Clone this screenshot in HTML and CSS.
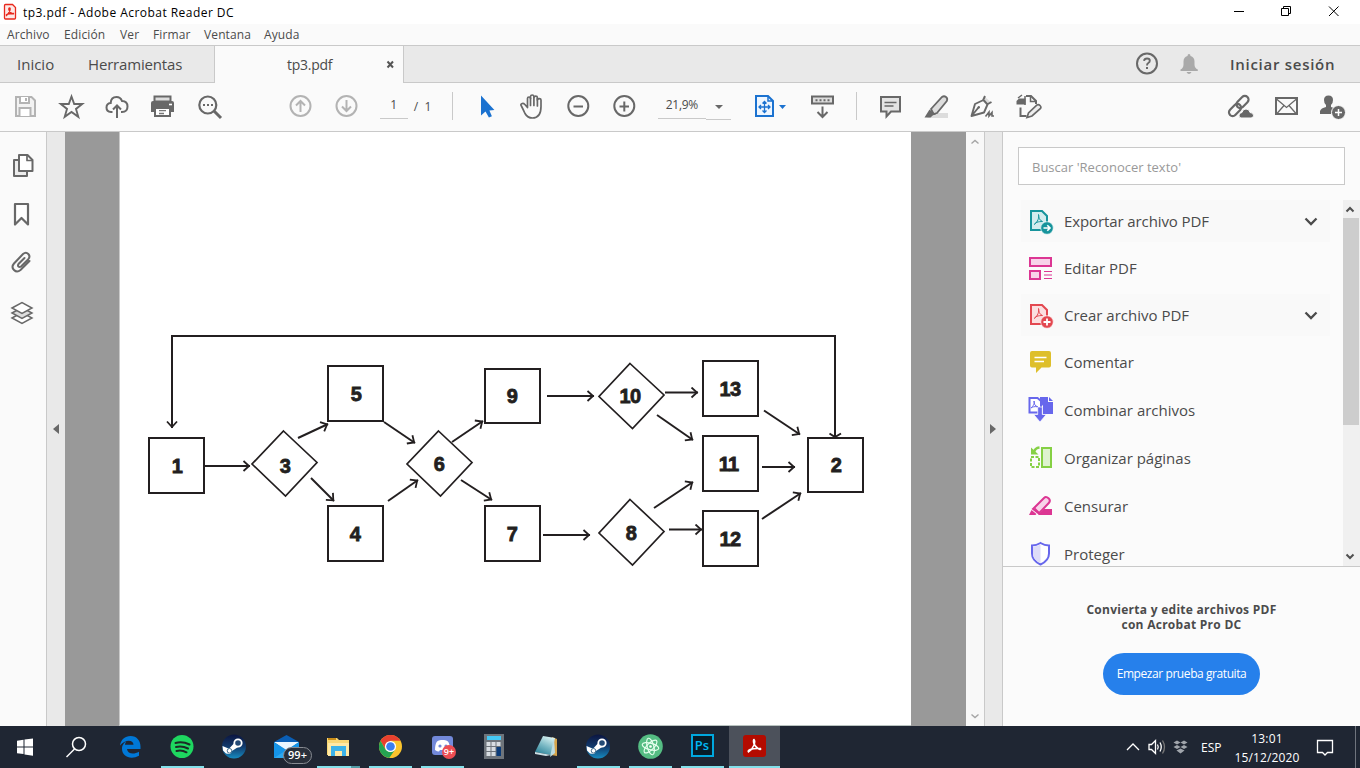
FILE: index.html
```html
<!DOCTYPE html>
<html lang="es">
<head>
<meta charset="utf-8">
<title>tp3.pdf - Adobe Acrobat Reader DC</title>
<link rel="stylesheet" href="styles.css">
</head>
<body>
<div class="screen">
  <header class="titlebar">
    <svg class="app-icon" viewBox="3 3 14 18"><path d="M5.5 4.500h7l3 3v10.500q0 1-1 1h-9q-1 0-1-1v-12.500q0-1 1-1z" fill="#fde9e7" stroke="#e8281c" stroke-width="1.300"/><path d="M9.500 8c1.500 0 .5 4-3 7.500-1-1 1.500-2 7-2 .5 1-3 .5-4.500-3.500-.5-1.200 0-2 .5-2z" fill="none" stroke="#e8281c" stroke-width="1.300"/></svg>
    <span class="title">tp3.pdf - Adobe Acrobat Reader DC</span>
    <svg class="win-controls" viewBox="1220 0 140 24" fill="none" stroke="#000"><path d="M1234 11.500h10M1281.500 8.500h7v7h-7zM1283.500 8.500v-2h7v7h-2M1329 6.500l9.500 9.500M1338.500 6.500l-9.500 9.500"/></svg>
  </header>
  <nav class="menubar"><span class="m1">Archivo</span><span class="m2">Edición</span><span class="m3">Ver</span><span class="m4">Firmar</span><span class="m5">Ventana</span><span class="m6">Ayuda</span></nav>
  <div class="tabs">
    <div class="tabs-left"><span class="t1">Inicio</span><span class="t2">Herramientas</span></div>
    <div class="tab-active"><span>tp3.pdf</span><svg class="tab-x" viewBox="386 60 9 9"><path d="M387.500 61.500l5.500 6M393 61.500l-5.500 6" stroke="#555" stroke-width="2"/></svg></div>
    <div class="tabs-right">
      <svg class="i28" viewBox="1133 50 28 28" fill="none" stroke="#686868"><circle cx="1147" cy="63.500" r="10" stroke-width="2"/><path d="M1144 60.800q.4-2.300 3-2.300 2.800 0 2.800 2.300 0 1.400-1.500 2.200-1.300.8-1.300 2.500" stroke-width="1.900"/><path d="M1147 67v2" stroke-width="2"/></svg>
      <svg class="i28 bell" viewBox="1175 50 28 28" fill="#a9a9a9"><path d="M1180.500 71v-1.500q3-1.500 3-5v-3q0-4.500 4-5.500 0-2 1.500-2t1.500 2q4 1 4 5.500v3q0 3.500 3.300 5v1.500zM1186.500 72h5q-1 2-2.500 2t-2.500-2z"/></svg>
      <b class="signin">Iniciar sesión</b>
    </div>
  </div>
  <div class="toolbar">
    <div class="group g1">
      <svg class="i28" viewBox="12 92 28 28" fill="none" stroke="#b3b3b3" stroke-width="2"><path d="M16 97h15.500l3.500 3.500v15.500h-19z" fill="#f2f2f2"/><path d="M20 97v6h9v-6M19.500 116v-8h11v8" fill="#fff"/><path d="M26 98v3"/></svg>
      <svg class="i28" viewBox="58 92 28 28" fill="none" stroke="#686868" stroke-width="1.900"><path d="M71.500 96.500l2.700 7.500h8l-6.200 4.900 2.300 7.900-6.800-4.800-6.800 4.800 2.300-7.900-6.200-4.900h8z"/></svg>
      <svg class="i28" viewBox="103.500 92 28 28" fill="none" stroke="#686868" stroke-width="2"><path d="M113 112h-1.500q-4.500-.3-4.500-4.500 0-4 4.200-4.500.3-6 5.800-6 4 0 5.500 4 5.500.2 5.500 5.500 0 5.500-5.500 5.500h-1M117.500 118v-12M113.500 109.500l4-4 4 4"/></svg>
      <svg class="i28" viewBox="149 92 28 28"><path d="M154.500 96.500h16v5h-16z" fill="#ddd" stroke="#686868" stroke-width="2"/><path d="M153 101h19q2 0 2 2v9h-23v-9q0-2 2-2z" fill="#686868"/><path d="M155 108h15v8h-15z" fill="#fff" stroke="#686868" stroke-width="2"/><path d="M159 110.700h7M159 113.500h5" stroke="#777" stroke-width="1.300"/><path d="M169 104.500h3" stroke="#fff" stroke-width="1.600"/></svg>
      <svg class="i28" viewBox="195 92 28 28" fill="none" stroke="#686868"><circle cx="207.800" cy="105" r="8.500" stroke-width="2.200"/><path d="M214 111l7 7" stroke-width="3"/><path d="M203 105h10" stroke-width="2" stroke-dasharray="2 2"/></svg>
    </div>
    <div class="group g2">
      <svg class="i28" viewBox="286 92 28 28" fill="none" stroke="#b3b3b3" stroke-width="2"><circle cx="300.500" cy="106" r="10"/><path d="M300.500 112v-11M296 105.500l4.500-4.500 4.500 4.500"/></svg>
      <svg class="i28" viewBox="332 92 28 28" fill="none" stroke="#b3b3b3" stroke-width="2"><circle cx="346.500" cy="106" r="10"/><path d="M346.500 100v11M342 106.500l4.500 4.500 4.500-4.500"/></svg>
    </div>
    <div class="page-box">1</div><div class="page-total">/&nbsp; 1</div>
    <div class="sep s1"></div>
    <div class="group g3">
      <svg class="i28" viewBox="473 92 28 28"><path d="M481 95.500v20l4.500-4 3.400 6 3-1.300-2.500-5.700 5-.5z" fill="#1b72d0"/></svg>
      <svg class="i28" viewBox="519 92 28 28" fill="none" stroke="#686868" stroke-width="1.700" stroke-linecap="round" stroke-linejoin="round"><path d="M528.500 106.500v-8q0-1.500 1.500-1.500t1.500 1.500v-2q.2-1.500 1.700-1.500t1.700 1.500v1q.2-1.400 1.800-1.400t1.700 1.400v2.500q.2-1.400 1.900-1.400t1.700 1.400v6.500c0 7-2.500 11.500-8.500 11.500q-5 0-7.500-4.500-1.800-4-3.600-7.500-1.200-1.500.3-2.300 1.700-.7 3.200.8l2.600 3z"/><path d="M531.500 98v7.500M534.900 97v8.500M538.400 98.500v7.500"/></svg>
      <svg class="i28" viewBox="564 92 28 28" fill="none" stroke="#686868" stroke-width="2"><circle cx="578.300" cy="106" r="10"/><path d="M573.500 106.500h9.500"/></svg>
      <svg class="i28" viewBox="610 92 28 28" fill="none" stroke="#686868" stroke-width="2"><circle cx="624.300" cy="106" r="10"/><path d="M619.500 106.500h9.500M624.300 101.500v10"/></svg>
    </div>
    <div class="zoom-box">21,9%</div><div class="zoom-drop"><i class="caret"></i></div>
    <div class="group g4">
      <svg class="fit" viewBox="752 92 38 28" fill="none" stroke="#1b72d0"><path d="M756 96h12l5 5v15h-17z" fill="#eef6ff" stroke-width="2"/><path d="M768 96v5h5" stroke-width="1.500"/><path d="M764.500 101.500v11M759 107h11M762.500 103.500l2-2 2 2M762.500 110.500l2 2 2-2M761 105l-2 2 2 2M768 105l2 2-2 2" stroke-width="1.300"/><path d="M779 105h7l-3.500 4z" fill="#1b72d0" stroke="none"/></svg>
      <svg class="i28 kb" viewBox="808 92 28 28" fill="none" stroke="#686868" stroke-width="2"><path d="M812 96.500h21v7h-21z" fill="#ddd"/><path d="M815.500 100.200h14" stroke-dasharray="2 2"/><path d="M822.500 106.500v10M817.500 112l5 5 5-5"/></svg>
    </div>
    <div class="sep s2"></div>
    <div class="group g5">
      <svg class="i28" viewBox="876 92 28 28" fill="#e4e4e4" stroke="#686868" stroke-width="2"><path d="M881 97h19v14.500h-9l-4.500 5v-5h-5.500z"/><path d="M884.500 102.500h12M884.500 106h9" stroke-width="1.300"/></svg>
      <svg class="i28" viewBox="922 92 28 28"><path d="M931 113h17v5h-21z" fill="#dcdcdc"/><path d="M931 109l11-12q2-1.500 4 0t.8 4l-9.800 12-3.500 1z" fill="#ddd" stroke="#686868" stroke-width="1.800"/><path d="M929.500 109.500l6.500 5-3 .8-2.500 2.200h-6z" fill="#686868"/></svg>
      <svg class="i28" viewBox="968 92 28 28" fill="none" stroke="#686868" stroke-width="1.900"><path d="M984.500 96.500l6 5.500-3 3-6-5z" fill="#ddd" stroke="none"/><path d="M971.500 116l3.500-12 8.500-4 4 4.500-3.500 8zM971.500 116l7-8.500M983 100.500l2-4.500M987 104.500l4.500-2.500" stroke-linejoin="round"/><circle cx="978.800" cy="107.200" r="1.200" fill="#686868" stroke="none"/><path d="M985.500 116.500l3.500-4.500v4l3-3.500v3.500h2" stroke-width="1.600"/></svg>
      <svg class="i28" viewBox="1014 92 28 28" fill="none" stroke="#686868" stroke-width="2"><path d="M1026 96h5l5 5v3M1020.500 107.500v8.500h6"/><path d="M1030.500 96v5.500h5.500" stroke-width="1.500"/><path d="M1019 98.500h6.500v6h-9v-3.500z" fill="#686868" stroke="none"/><path d="M1018 98l4-3M1025 96v9" stroke="#686868" stroke-width="1.500"/><path d="M1027 117.500l1.500-4.500 8.500-8q1.500-1 3 .5t.5 3l-8.500 7.500z" fill="#eee" stroke-width="1.700"/></svg>
    </div>
    <div class="group g6">
      <svg class="i28" viewBox="1226 92 28 28"><g fill="none" stroke="#686868" stroke-width="2.200"><rect x="-7" y="-3.700" width="14" height="7.400" rx="3.700" transform="translate(1235 110) rotate(-45)"/><rect x="-7" y="-3.700" width="14" height="7.400" rx="3.700" transform="translate(1242.500 102) rotate(-45)"/></g><path d="M1241 118q-2.500-.5-2-3t3-2.500q.5-3.500 4-3.500t4 3.500q3.500 0 3.500 3 0 2.500-2.500 2.500z" fill="#686868" stroke="#fafafa" stroke-width="1"/></svg>
      <svg class="i28" viewBox="1272 92 28 28" fill="none" stroke="#686868"><path d="M1276 98h21v16h-21z" stroke-width="2"/><path d="M1276.500 99l10 8.500 10-8.500M1277 113.500l7-8M1296 113.500l-7-8" stroke-width="1.300"/></svg>
      <svg class="i28" viewBox="1318 92 28 28" fill="#686868"><path d="M1320 114v-3q1-3 6-4v-2q-2-1.500-2-5 0-4.500 4.500-4.500t4.500 4.500q0 3.500-2 5v2l4 1.500-4 5.500z"/><circle cx="1338.500" cy="112.500" r="7" stroke="#fafafa"/><path d="M1338.500 109v7M1335 112.500h7" stroke="#fff" stroke-width="1.500"/></svg>
    </div>
  </div>
  <main class="work">
    <aside class="rail">
      <svg class="r1" viewBox="9 151 28 28" fill="#ececec" stroke="#686868" stroke-width="2" stroke-linejoin="round"><path d="M18 160h-4v16h13v-5" /><path d="M19 155h8.500l5 5v11h-13.500z" fill="#fff"/><path d="M27 155v5.500h5.500" fill="none" stroke-width="1.700"/></svg>
      <svg class="r2" viewBox="9 200 28 28" fill="#fff" stroke="#686868" stroke-width="2.200" stroke-linejoin="round"><path d="M15 204h13v20.500l-6.500-6.500-6.500 6.500z"/></svg>
      <svg class="r3" viewBox="9 248 28 28" fill="none" stroke="#686868" stroke-width="2" stroke-linecap="round"><path d="M29.500 261l-9 9q-3.500 3-6.500 0t0-6.500l9-9.500q3-2.500 5.300 0t0 5.200l-7.300 7.300q-1.500 1-2.500 0t0-2.500l6-6"/></svg>
      <svg class="r4" viewBox="9 299 28 28" fill="#ddd" stroke="#686868" stroke-width="1.500"><path d="M12 318l10-5.500 10 5.500-10 5.500z" fill="#fff"/><path d="M12 313l10-5.500 10 5.500-10 5.500z"/><path d="M12 308l10-5.500 10 5.500-10 5.500z" fill="#fff"/></svg>
    </aside>
    <div class="gutter"><i class="tri-left"></i></div>
    <section class="viewer">
      <div class="page">
        <svg class="diagram" viewBox="120 132 791 593">
          <defs><marker id="head" viewBox="-7 -6 9 12" markerWidth="9" markerHeight="12" markerUnits="userSpaceOnUse" orient="auto" refX="1" refY="0"><path d="M-5.500-5L0 0l-5.500 5" fill="none" stroke="#231f20" stroke-width="1.800"/></marker></defs>
          <g fill="none" stroke="#231f20" stroke-width="2">
            <rect x="149" y="438" width="55" height="55"/><rect x="328" y="366" width="55" height="55"/><rect x="328" y="506" width="55" height="55"/><rect x="485" y="369" width="55" height="54"/><rect x="485" y="506" width="55" height="55"/><rect x="703" y="361" width="55" height="55"/><rect x="703" y="436" width="55" height="55"/><rect x="703" y="511" width="55" height="55"/><rect x="808" y="438" width="55" height="54"/>
            <path stroke-width="1.700" d="M283.500 431l33.500 31.500-31.500 33.500-33.500-32zM438.500 431l33.500 31.500-31.500 33.500-33.500-32zM630 363.500l34 31.500-31.500 33.500-33.500-32zM630 499.500l34 32-31.500 33.500-33.500-32z"/>
            <path d="M835 437v-101h-663v92" marker-end="url(#head)"/><path d="M829.500 433.500l5.500 3.500 6-3.500"/>
            <path d="M205 466h45" marker-end="url(#head)"/><path d="M298 438l30-14" marker-end="url(#head)"/><path d="M311 478l23 23" marker-end="url(#head)"/><path d="M384 422l31 21" marker-end="url(#head)"/><path d="M388 501l30-21" marker-end="url(#head)"/><path d="M452 442l31-21" marker-end="url(#head)"/><path d="M461 480l31 20" marker-end="url(#head)"/><path d="M547 396h47" marker-end="url(#head)"/><path d="M543 535h47" marker-end="url(#head)"/><path d="M665 392.500h33" marker-end="url(#head)"/><path d="M657 415l36 25" marker-end="url(#head)"/><path d="M654 508l39-26" marker-end="url(#head)"/><path d="M669 529.500h33" marker-end="url(#head)"/><path d="M764 410.500l36 24" marker-end="url(#head)"/><path d="M762 467h33" marker-end="url(#head)"/><path d="M762 519l39-26" marker-end="url(#head)"/>
          </g>
          <g class="num"><text x="177" y="472.500">1</text><text x="285" y="472.500">3</text><text x="356" y="401">5</text><text x="355" y="541">4</text><text x="439" y="471">6</text><text x="512" y="402.500">9</text><text x="512" y="541">7</text><text x="630" y="402.500">10</text><text x="631" y="540">8</text><text x="730" y="395.500">13</text><text x="728.500" y="471">11</text><text x="730" y="546">12</text><text x="836" y="472">2</text></g>
        </svg>
      </div>
    </section>
    <div class="vscroll"><svg viewBox="0 0 10 7"><path d="M1.500 5.500l3.500-3 3.500 3"/></svg><svg viewBox="0 0 10 7"><path d="M1.500 1.500l3.500 3 3.500-3"/></svg></div>
    <div class="splitter"><i class="tri-right"></i></div>
    <aside class="panel">
      <div class="search">Buscar 'Reconocer texto'</div>
      <div class="tools">
        <div class="tool-list">
          <div class="tool shaded"><svg viewBox="1028 206 28 28"><path d="M1031 210h11l5 5v14h-16z" fill="#d3ecee" stroke="#17949c" stroke-width="2"/><path d="M1038.500 213.500c1 3-1 7.500-4 10 0-2 4-3 8-3-3-1-4-4-4-7z" fill="none" stroke="#17949c"/><circle cx="1047" cy="227" r="6.300" fill="#17949c" stroke="#fff" stroke-width=".7"/><path d="M1043.500 227h6M1047.300 224.300l2.700 2.700-2.700 2.700" stroke="#fff" stroke-width="1.600" fill="none"/></svg><span class="tight">Exportar archivo PDF</span><svg class="chev" viewBox="0 0 14 9"><path d="M1.500 1.500l5.500 5.500 5.500-5.500"/></svg></div>
          <div class="tool"><svg viewBox="1028 253 28 28" fill="#f8d3e9" stroke="#dc3693" stroke-width="2"><path d="M1030 257h21v8h-21zM1030 270h10v8h-10z"/><path d="M1044 270.500h8M1044 274h8M1044 277.500h8" stroke-width="1.200"/></svg><span>Editar PDF</span></div>
          <div class="tool shaded"><svg viewBox="1028 300 28 28"><path d="M1031 304h11l5 5v14h-16z" fill="#fbdfe0" stroke="#e34850" stroke-width="2"/><path d="M1038.500 307.500c1 3-1 7.500-4 10 0-2 4-3 8-3-3-1-4-4-4-7z" fill="none" stroke="#e34850"/><circle cx="1047" cy="321" r="6.300" fill="#e34850" stroke="#fff" stroke-width=".7"/><path d="M1043.500 321h7M1047 317.500v7" stroke="#fff" stroke-width="1.800"/></svg><span>Crear archivo PDF</span><svg class="chev" viewBox="0 0 14 9"><path d="M1.500 1.500l5.500 5.500 5.500-5.500"/></svg></div>
          <div class="tool"><svg viewBox="1028 348 28 28"><path d="M1032 351h17q2 0 2 2v12.500q0 2-2 2h-7.500l-5.500 5.500v-5.500h-4q-2 0-2-2v-12.500q0-2 2-2z" fill="#debf2b"/><path d="M1034.500 357.500h12M1034.500 361.500h9.500" stroke="#fff" stroke-width="1.600"/></svg><span>Comentar</span></div>
          <div class="tool tall"><svg viewBox="1028 396 28 28"><path d="M1029.500 398h8l3.500 3v11.500h-11.500z" fill="#fff" stroke="#6767ec" stroke-width="2"/><path d="M1034 401c1 3-1 5-3 7 1-1 4-2 7-1-3-1-4-3-4-6z" fill="none" stroke="#6767ec"/><path d="M1040 397h8v5h5v12h-10v-8l-3-4zM1049 397l4 4h-4z" fill="#6767ec"/><path d="M1037.700 407h4.600v7.500h4l-6.300 7.500-6.300-7.500h4z" fill="#6767ec" stroke="#fff" stroke-width=".7"/></svg><span>Combinar archivos</span></div>
          <div class="tool tall"><svg viewBox="1028 444 28 28"><path d="M1042 448h9v19h-9z" fill="#def3cf" stroke="#85d044" stroke-width="2"/><path d="M1031 457h8v10h-8z" fill="none" stroke="#85d044" stroke-width="2" stroke-dasharray="3 1.500"/><path d="M1039.500 447.500q-4.500.5-5.500 4.500" fill="none" stroke="#85d044" stroke-width="2.500"/><path d="M1031 447.500v7h7.500z" fill="#85d044"/></svg><span>Organizar páginas</span></div>
          <div class="tool tall"><svg viewBox="1028 492 28 28"><path d="M1052 509v6h-14l6-6zM1029 515l2.500-5 5 4-1 1z" fill="#dc3693"/><path d="M1033 509l11-11q2-2 4.500.3t.3 4.700l-10 10.500z" fill="#f8d3e9" stroke="#dc3693" stroke-width="2"/><path d="M1034.500 508.500l5 5" stroke="#dc3693" stroke-width="2"/></svg><span>Censurar</span></div>
          <div class="tool tall"><svg viewBox="1028 540 28 28"><path d="M1040.500 543q4 2.500 8.500 2.500v8q0 7-8.500 11-8.500-4-8.500-11v-8q4.500 0 8.500-2.500z" fill="#fff" stroke="#6767ec" stroke-width="2"/><path d="M1040.500 544.500q-3 1.800-7.500 2v7q0 6 7.500 9.800z" fill="#dddcf8"/></svg><span>Proteger</span></div>
        </div>
        <div class="tool-scroll"><svg viewBox="0 0 10 7"><path d="M1.500 5.500l3.500-3.500 3.500 3.500"/></svg><div class="thumb"></div><svg class="dn" viewBox="0 0 10 7"><path d="M1.500 1.500l3.500 3.500 3.500-3.500"/></svg></div>
      </div>
      <div class="promo"><b>Convierta y edite archivos PDF<br>con Acrobat Pro DC</b><div class="cta">Empezar prueba gratuita</div></div>
    </aside>
  </main>
  <footer class="taskbar">
    <div class="apps">
      <div class="app"><svg viewBox="10 731 32 32" fill="#fff"><path d="M17 740.800l6.500-1v6.700h-6.500zM24.500 739.600l8.500-1.200v8.100h-8.500zM17 747.500h6.500v6.600l-6.500-.9zM24.500 747.500h8.500v8.200l-8.500-1.300z"/></svg></div>
      <div class="app"><svg viewBox="62 731 32 32" fill="none" stroke="#fff" stroke-width="1.500"><circle cx="79" cy="744" r="6.500"/><path d="M74.500 749l-8 8"/></svg></div>
      <div class="app"><svg viewBox="114 731 32 32" fill="#0078d7"><path d="M120 745.500c1-6 5-9.500 10.500-9.500 6.500 0 10 5 10 10.500v2.500h-13.500c.5 4.800 6.500 6 12 2.800v4c-8 4.300-17 1-17-7 0-4 2.500-6.500 4.500-7.500-1 1.200-1.300 2-1.500 3.500h8.500c0-5.500-9-5.500-13.500.7z"/></svg></div>
      <div class="app on"><svg viewBox="166 731 32 32"><circle cx="182" cy="746.500" r="11.500" fill="#1ed760"/><path d="M175.500 743q7-2 14 1.500M176 747q6-1.500 12 1.500M176.500 751q5-1.500 10 1.300" stroke="#1c2a25" fill="none" stroke-width="2" stroke-linecap="round"/></svg></div>
      <div class="app"><svg viewBox="218 731 32 32"><defs><linearGradient id="st" x2="0" y2="1"><stop stop-color="#0b1540"/><stop offset=".5" stop-color="#123a6c"/><stop offset="1" stop-color="#168bc0"/></linearGradient></defs><circle cx="234" cy="746.500" r="12" fill="url(#st)"/><path d="M222.500 746l6.500 2.700 5.500-6 4 4-6.500 4.300-2 3-4-.5-3-3z" fill="#fff"/><circle cx="238" cy="743" r="3.700" fill="#234a76" stroke="#fff" stroke-width="1.800"/><circle cx="229.500" cy="750.800" r="2.300" fill="#fff" stroke="#46708f"/></svg></div>
      <div class="app"><svg viewBox="270 731 32 32"><path d="M274 742l12.500-7 12.500 7-12.500 8z" fill="#0a5eb5"/><path d="M274 742h25l-12.500 9z" fill="#eaf6ff"/><path d="M274 742l12.500 8 12.500-8v16h-25z" fill="#1594e8"/><path d="M275 742h23l-11.500 6.500z" fill="#eaf6ff"/><path d="M274 758l12.500-8 12.500 8z" fill="#2ca8f0"/></svg><span class="badge mail-badge">99+</span></div>
      <div class="app on folder"><svg viewBox="322 731 32 32"><path d="M327 738h10l2 2h10v15h-22z" fill="#f8d775"/><path d="M328 738h8v2h-8z" fill="#c98d18"/><path d="M328 743h21v13h-21z" fill="#ffe9a5"/><path d="M331 746h15v10h-4v-5h-7v5h-4z" fill="#3bb2e8"/></svg></div>
      <div class="app on"><svg viewBox="374 731 32 32"><circle cx="390.500" cy="746.500" r="11.500" fill="#fbc42d"/><path d="M380.500 740.800a11.500 11.500 0 0 1 20 0h-10l-5 8.500z" fill="#e8402f"/><path d="M380.500 740.800l5 8.700 5 2.700 4.500-2.500-5.800 8.300a11.500 11.500 0 0 1-8.700-17.200z" fill="#25a452"/><circle cx="390.500" cy="746.500" r="5.600" fill="#fff"/><circle cx="390.500" cy="746.500" r="4.300" fill="#3c7ef0"/></svg></div>
      <div class="app on"><svg viewBox="426 731 32 32"><rect x="432" y="736" width="21" height="19" rx="3" fill="#7289da"/><path d="M435 750q0-6 2-8.500 1.500-1.500 4-1.500h3q2.500 0 4 1.500 2 2.500 2 8.500-2 1.500-4 1.500l-1-1.500h-5l-1 1.500q-2 0-4-1.500z" fill="#fff"/><circle cx="440" cy="746" r="1.600" fill="#7289da"/><circle cx="446" cy="746" r="1.600" fill="#7289da"/></svg><span class="badge discord-badge">9+</span></div>
      <div class="app"><svg viewBox="478 731 32 32"><path d="M484 734h20v25h-20z" fill="#6e747b"/><path d="M487 736h14v4h-14z" fill="#45c8f5"/><path d="M486.500 742h4v4h-4zM491.500 742h4v4h-4zM496.500 742h4v4h-4zM486.500 747h4v4h-4zM491.500 747h4v4h-4zM486.500 752h4v4h-4zM491.500 752h4v4h-4z" fill="#d8dde2"/><path d="M496.500 747h4.500v9h-4.500z" fill="#0b3b78"/></svg></div>
      <div class="app"><svg viewBox="530 731 32 32"><defs><linearGradient id="np" x1=".7" y1="0" x2=".2" y2="1"><stop stop-color="#d9f2f2"/><stop offset=".5" stop-color="#79b8c4"/><stop offset="1" stop-color="#277f96"/></linearGradient></defs><path d="M552 737l5 2v17l-6-1z" fill="#d5a44b"/><path d="M543 736l12 2-4 17-16-3z" fill="url(#np)"/><path d="M535 752l16 3-5 1-11-2z" fill="#ccdfe4"/><path d="M554 738l1 15-5 4z" fill="#bcdce2"/></svg></div>
      <div class="app on"><svg viewBox="582 731 32 32"><circle cx="598" cy="746.500" r="12" fill="url(#st)"/><path d="M586.500 746l6.500 2.700 5.500-6 4 4-6.500 4.300-2 3-4-.5-3-3z" fill="#fff"/><circle cx="602" cy="743" r="3.700" fill="#234a76" stroke="#fff" stroke-width="1.800"/><circle cx="593.500" cy="750.800" r="2.300" fill="#fff" stroke="#46708f"/></svg></div>
      <div class="app on"><svg viewBox="634 731 32 32"><circle cx="650.500" cy="746.500" r="12.300" fill="#55bd83"/><g fill="none" stroke="#e4ffed" stroke-width="1.200"><ellipse cx="650.500" cy="746.500" rx="8.500" ry="3.300" transform="rotate(15 650.500 746.500)"/><ellipse cx="650.500" cy="746.500" rx="8.500" ry="3.300" transform="rotate(75 650.500 746.500)"/><ellipse cx="650.500" cy="746.500" rx="8.500" ry="3.300" transform="rotate(135 650.500 746.500)"/></g><circle cx="650.500" cy="746.500" r="1.300" fill="#fff"/></svg></div>
      <div class="app on"><span class="ps">Ps</span></div>
      <div class="app on active"><svg viewBox="738 731 32 32"><rect x="743" y="735" width="23" height="22" rx="3" fill="#b30b00"/><path d="M754 739.500c2 2-.5 9-5.500 12.500-1.500-1.500 2-4 12-3.500 1.500 3-6-1-7-6.500q-.2-2.500.5-2.500z" fill="none" stroke="#fff" stroke-width="1.500"/></svg></div>
    </div>
    <div class="tray">
      <svg class="tray-icons" viewBox="1124 731 70 32" fill="none" stroke="#fff" stroke-width="1.300"><path d="M1127 750l6-6 6 6"/><path d="M1149 744.500h2.500l4-4v13l-4-4h-2.500zM1157.500 744.500q1.500 2.500 0 5M1160 742.500q2.500 4.500 0 9"/><path d="M1162.500 740.500q4 6.500 0 13" stroke="#777"/><path d="M1173.500 742.500l3.500-2 3.500 2-3.500 2zM1180.500 742.500l3.500-2 3.500 2-3.500 2zM1173.500 747l3.500-2 3.500 2-3.500 2zM1180.500 747l3.500-2 3.500 2-3.500 2zM1176.500 750.500l4-2 4 2-4 3z" fill="#a0a5ac" stroke="none"/></svg>
      <span class="lang">ESP</span>
      <div class="clock"><span>13:01</span><span>15/12/2020</span></div>
      <svg class="notif" viewBox="1314 735 22 22" fill="none" stroke="#fff" stroke-width="1.300"><path d="M1317.500 739.500h15v12h-5l-2.500 2.500-2.500-2.500h-5z"/></svg>
      <i class="show-desktop"></i>
    </div>
  </footer>
</div>
</body>
</html>
```
FILE: styles.css
```css
* { box-sizing: border-box; }
body { margin: 0; font-family: "Open Sans", "Noto Sans", sans-serif; color: #4b4b4b; }
svg { display: block; flex: none; }
.screen { width: 1360px; height: 768px; display: flex; flex-direction: column; overflow: hidden; background: #fafafa; white-space: nowrap; }

.titlebar { height: 24px; background: #fff; display: flex; align-items: center; color: #000; font-size: 12px; padding-left: 3px; }
.app-icon { width: 14px; height: 18px; }
.title { margin-left: 6px; letter-spacing: 0.460px; }
.win-controls { width: 140px; height: 24px; margin-left: auto; }

.menubar { height: 21px; background: #fafafa; display: flex; align-items: center; padding-left: 7px; font-size: 12px; letter-spacing: 0.120px; }
.menubar span { flex: none; }
.m1 { width: 57px; } .m2 { width: 56px; } .m3 { width: 33px; } .m4 { width: 51px; } .m5 { width: 60px; }

.tabs { height: 38px; display: flex; background: #e9e9e9; border-top: 1px solid #c9c9c9; }
.tabs-left { width: 215px; border-right: 1px solid #c9c9c9; border-bottom: 1px solid #c9c9c9; display: flex; align-items: center; font-size: 15px; padding-left: 17px; }
.t1 { width: 71px; }
.t2 { letter-spacing: -0.170px; }
.tab-active { width: 188px; background: #fafafa; display: flex; align-items: center; padding: 0 8px 0 72px; font-size: 14px; letter-spacing: -0.250px; justify-content: space-between; }
.tab-x { width: 9px; height: 9px; }
.tabs-right { flex: 1; border-left: 1px solid #c9c9c9; border-bottom: 1px solid #c9c9c9; display: flex; align-items: center; justify-content: flex-end; padding-right: 25px; }
.i28 { width: 28px; height: 28px; }
.bell { margin-left: 14px; }
.signin { width: 105px; margin-left: 27px; font-size: 15px; font-weight: 600; letter-spacing: 0.720px; }

.toolbar { height: 49px; border-bottom: 1px solid #c9c9c9; display: flex; align-items: center; padding: 0 14px 2px 12px; }
.group { display: flex; }
.g1 { gap: 17.700px; }
.g2 { margin-left: 63px; gap: 18px; }
.page-box { width: 28px; height: 26px; margin-left: 20px; border-bottom: 1px solid #c9c9c9; font-size: 12px; line-height: 24px; text-align: center; }
.page-total { width: 24px; margin-left: 6px; font-size: 12px; }
.sep { width: 1px; height: 28px; background: #c9c9c9; }
.s1 { margin-left: 14px; }
.g3 { margin-left: 20px; gap: 17.700px; }
.zoom-box { width: 48px; height: 26px; margin-left: 20px; border-bottom: 1px solid #c9c9c9; font-size: 12px; line-height: 24px; padding-left: 8px; letter-spacing: -0.300px; }
.zoom-drop { width: 25px; height: 27px; border-bottom: 1px solid #c9c9c9; display: flex; align-items: center; justify-content: center; }
.caret { border: 4px solid transparent; border-top-color: #686868; border-bottom: 0; margin: 2px 0 0 2px; }
.g4 { margin-left: 21px; gap: 18px; }
.fit { width: 38px; height: 28px; }
.s2 { margin-left: 20px; }
.g5 { margin-left: 19px; gap: 18px; }
.g6 { margin-left: auto; gap: 18px; }

.work { height: 594px; display: flex; }
.rail { width: 47px; border-right: 1px solid #c9c9c9; padding: 19px 9px; }
.rail svg { width: 28px; height: 28px; }
.r2 { margin-top: 21px; } .r3 { margin-top: 20px; } .r4 { margin-top: 23px; }
.gutter { width: 18px; background: #e9e9e9; display: flex; align-items: center; padding-left: 6px; }
.tri-left { border: 5.500px solid transparent; border-right: 6px solid #686868; border-left: 0; }
.viewer { width: 901px; background: #999; padding: 0 55px 0 54px; }
.page { height: 594px; background: #fff; border-left: 1px solid #c9c9c9; border-bottom: 1px solid #b9c3c0; }
.diagram { width: 791px; height: 593px; }
.num { font: bold 20px "Liberation Sans", Arial, sans-serif; letter-spacing: -0.700px; text-anchor: middle; fill: #231f20; stroke: #231f20; stroke-width: 0.800px; }
.vscroll { width: 18px; background: #f8f8f8; display: flex; flex-direction: column; justify-content: space-between; align-items: center; padding: 6px 0; }
.vscroll svg { width: 10px; height: 7px; fill: none; stroke: #a5a5a5; stroke-width: 1.400px; }
.splitter { width: 19px; background: #e9e9e9; border: 1px solid #c9c9c9; border-width: 0 1px; display: flex; align-items: center; padding-left: 5px; }
.tri-right { border: 5.500px solid transparent; border-left: 6px solid #686868; border-right: 0; }

.panel { flex: 1; display: flex; flex-direction: column; background: #fbfbfb; }
.search { height: 38px; margin: 15px 15px 0; background: #fff; border: 1px solid #c9c9c9; padding-left: 13px; font-size: 13px; line-height: 39px; color: #999; }
.tools { height: 367px; margin-top: 15px; border-bottom: 1px solid #c9c9c9; display: flex; justify-content: space-between; }
.tool-list { width: 309px; margin-left: 18px; overflow: hidden; }
.tool { height: 42px; margin-bottom: 5px; display: flex; align-items: center; padding-left: 7px; font-size: 15px; }
.tool svg { width: 28px; height: 28px; }
.tool span { margin-left: 8px; }
.tool .tight { letter-spacing: -0.100px; }
.tool.tall { height: 43px; }
.shaded { background: #f9f9f9; }
.tool .chev { width: 14px; height: 9px; margin-left: auto; margin-right: 12px; fill: none; stroke: #4b4b4b; stroke-width: 2.300px; }
.tool-scroll { width: 17px; background: #f0f0f0; display: flex; flex-direction: column; align-items: flex-start; padding: 6px 0; }
.tool-scroll svg { width: 10px; height: 7px; margin-left: 2px; fill: none; stroke: #505050; stroke-width: 2px; }
.thumb { width: 16px; height: 207px; margin-top: 5px; background: #cdcdcd; }
.tool-scroll .dn { margin-top: auto; }
.promo { flex: 1; display: flex; flex-direction: column; align-items: center; padding-top: 35px; text-align: center; font-size: 12px; line-height: 15px; letter-spacing: 0.270px; }
.cta { width: 157px; height: 42px; margin-top: 21px; border-radius: 21px; background: #2680eb; color: #fff; line-height: 42px; font-size: 12px; letter-spacing: -0.420px; }

.taskbar { height: 42px; background: #1f2633; display: flex; justify-content: space-between; color: #fff; }
.apps { display: flex; }
.app { width: 52px; height: 42px; position: relative; display: flex; justify-content: center; padding-top: 5px; }
.app svg { width: 32px; height: 32px; }
.on::after { content: ""; position: absolute; left: 5px; bottom: 0; width: 43px; height: 2px; background: #82e0ea; }
.folder::after { background: linear-gradient(90deg, #82e0ea 34px, #529ba5 34px); }
.active { background: #4c515b; width: 51px; margin-left: 1px; }
.active svg { margin-left: -1px; }
.active::after { left: 0; width: 51px; }
.badge { position: absolute; color: #fff; font-weight: 600; text-align: center; }
.mail-badge { left: 23px; top: 21px; width: 29px; height: 17px; border: 1px solid #878b92; border-radius: 9px; background: #292f3a; font-size: 11px; line-height: 14px; }
.discord-badge { left: 26px; top: 19px; width: 14px; height: 14px; border-radius: 7px; background: #ed4d53; font-size: 9px; line-height: 14px; }
.ps { width: 23px; height: 23px; border: 2px solid #00a8df; background: #071c28; color: #00b8f5; font-size: 13px; font-weight: 600; line-height: 18px; text-align: center; margin-top: 3px; }
.tray { display: flex; align-items: center; font-size: 12px; }
.tray-icons { width: 70px; height: 32px; }
.lang { width: 22px; margin-left: 7px; }
.clock { width: 68px; margin-left: 10px; display: flex; flex-direction: column; align-items: center; line-height: 19px; padding-top: 1px; letter-spacing: 0.150px; }
.notif { width: 22px; height: 22px; margin-left: 13px; }
.show-desktop { width: 1px; height: 42px; background: #6f747d; margin: 0 4px 0 19px; }
```
